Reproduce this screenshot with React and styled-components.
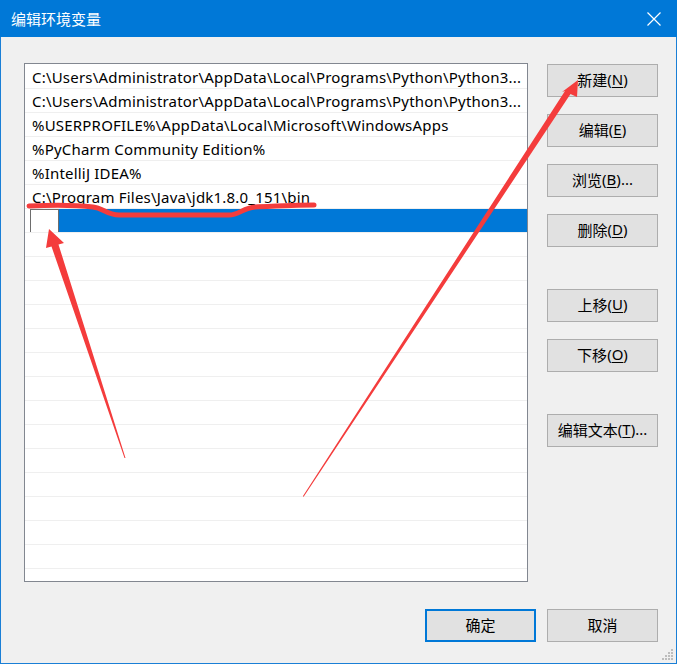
import React from "react";
import styled, { createGlobalStyle } from "styled-components";

const GlobalStyle = createGlobalStyle`
  html, body {
    margin: 0;
    padding: 0;
    background: #f0f0f0;
  }
  body {
    font-family: "Noto Sans", "Noto Sans CJK SC", sans-serif;
  }
`;

const Window = styled.div`
  position: relative;
  width: 677px;
  height: 664px;
  box-sizing: border-box;
  border: 1px solid #1a7fd6;
  border-top: none;
  background: #f0f0f0;
  display: flex;
  flex-direction: column;
`;

const TitleBar = styled.div`
  height: 37px;
  margin: 0 -1px;
  background: #0078d7;
  color: #fff;
  display: flex;
  align-items: center;
  justify-content: space-between;
  padding: 0 15px 0 11px;
  font-family: "Noto Sans CJK SC", sans-serif;
  font-size: 15px;
`;

const Close = styled.div`
  width: 16px;
  height: 16px;
  display: flex;
`;

const Body = styled.div`
  flex: 1;
  display: flex;
  flex-direction: column;
  padding: 26px 18px 0 23px;
`;

const Main = styled.div`
  display: flex;
  gap: 19px;
`;

const List = styled.div`
  width: 504px;
  height: 519px;
  box-sizing: border-box;
  border: 1px solid #828790;
  background: #fff;
  padding-top: 1px;
  overflow: hidden;
`;

const Row = styled.div`
  height: 24px;
  box-sizing: border-box;
  border-bottom: 1px solid #efefef;
  display: flex;
  align-items: center;
  padding-left: ${(p) => (p.$selected ? "5px" : "7px")};
  font-size: 15px;
  letter-spacing: 0.2px;
  color: #000;
  white-space: nowrap;
  overflow: hidden;
`;

const SelectedFill = styled.div`
  flex: 1;
  align-self: stretch;
  background: #0078d7;
  margin-bottom: -1px;
`;

const EditBox = styled.div`
  width: 29px;
  height: 24px;
  box-sizing: border-box;
  border: 1px solid #6d6d6d;
  background: #fff;
  align-self: flex-start;
`;

const Side = styled.div`
  width: 111px;
  display: flex;
  flex-direction: column;
  padding-top: 1px;
  gap: 17px;
`;

const Button = styled.button`
  width: 111px;
  height: 33px;
  box-sizing: border-box;
  margin-top: ${(p) => (p.$spaced ? "25px" : "0")};
  background: #e1e1e1;
  border: ${(p) => (p.$default ? "2px solid #0078d7" : "1px solid #adadad")};
  font-family: "Noto Sans CJK SC", "Noto Sans", sans-serif;
  font-size: 15px;
  color: #000;
  padding: 0 0 3px;
  display: flex;
  align-items: center;
  justify-content: center;
  cursor: default;
`;

const Key = styled.span`
  text-decoration: underline;
  text-underline-offset: 2px;
  font-family: "Noto Sans", sans-serif;
`;

const Latin = styled.span`
  font-family: "Noto Sans", sans-serif;
`;

const Footer = styled.div`
  margin-top: 27px;
  display: flex;
  justify-content: flex-end;
  gap: 11px;
`;

const Grip = styled.svg`
  position: absolute;
  right: 2px;
  bottom: 2px;
`;

const Marks = styled.svg`
  position: absolute;
  left: 0;
  top: 0;
  pointer-events: none;
`;

const paths = [
  "C:\\Users\\Administrator\\AppData\\Local\\Programs\\Python\\Python3...",
  "C:\\Users\\Administrator\\AppData\\Local\\Programs\\Python\\Python3...",
  "%USERPROFILE%\\AppData\\Local\\Microsoft\\WindowsApps",
  "%PyCharm Community Edition%",
  "%IntelliJ IDEA%",
  "C:\\Program Files\\Java\\jdk1.8.0_151\\bin",
];

const Label = ({ text, k, dots }) => (
  <>
    {text}
    <Latin>(</Latin>
    <Key>{k}</Key>
    <Latin>){dots ? "..." : ""}</Latin>
  </>
);

export default function App() {
  const empties = Array.from({ length: 15 });
  return (
    <>
      <GlobalStyle />
      <Window>
        <TitleBar>
          <span>编辑环境变量</span>
          <Close>
            <svg width="16" height="16" viewBox="0 0 16 16">
              <path d="M1.5 1.5 L14.5 14.5 M14.5 1.5 L1.5 14.5" stroke="#fff" strokeWidth="1.2" />
            </svg>
          </Close>
        </TitleBar>
        <Body>
          <Main>
            <List>
              {paths.map((p, i) => (
                <Row key={i}>{p}</Row>
              ))}
              <Row $selected>
                <EditBox />
                <SelectedFill />
              </Row>
              {empties.map((_, i) => (
                <Row key={"e" + i} />
              ))}
            </List>
            <Side>
              <Button><Label text="新建" k="N" /></Button>
              <Button><Label text="编辑" k="E" /></Button>
              <Button><Label text="浏览" k="B" dots /></Button>
              <Button><Label text="删除" k="D" /></Button>
              <Button $spaced><Label text="上移" k="U" /></Button>
              <Button><Label text="下移" k="O" /></Button>
              <Button $spaced><Label text="编辑文本" k="T" dots /></Button>
            </Side>
          </Main>
          <Footer>
            <Button $default>确定</Button>
            <Button>取消</Button>
          </Footer>
        </Body>
        <Grip width="12" height="12" viewBox="0 0 12 12">
          {[[9, 0], [6, 3], [9, 3], [3, 6], [6, 6], [9, 6], [0, 9], [3, 9], [6, 9], [9, 9]].map(([x, y], i) => (
            <rect key={i} x={x} y={y} width="2" height="2" fill="#bdbdbd" />
          ))}
        </Grip>
        <Marks width="677" height="664" viewBox="0 0 677 664">
          <path
            d="M28 206 C50 205 75 205 92 207 C102 208 106 215 118 215 L228 215 C238 215 242 208 254 207 C275 206 295 205 313 205"
            fill="none"
            stroke="#f43c3c"
            strokeWidth="5"
            strokeLinecap="round"
          />
          <polygon points="48,229 63,243 57.5,244.5 124.5,458 123.5,458 50.5,246.5 45,248" fill="#f43c3c" />
          <polygon points="577,80 576,97 569.5,94 302.5,497 302,496 564,91 561,92" fill="#f43c3c" />
        </Marks>
      </Window>
    </>
  );
}
